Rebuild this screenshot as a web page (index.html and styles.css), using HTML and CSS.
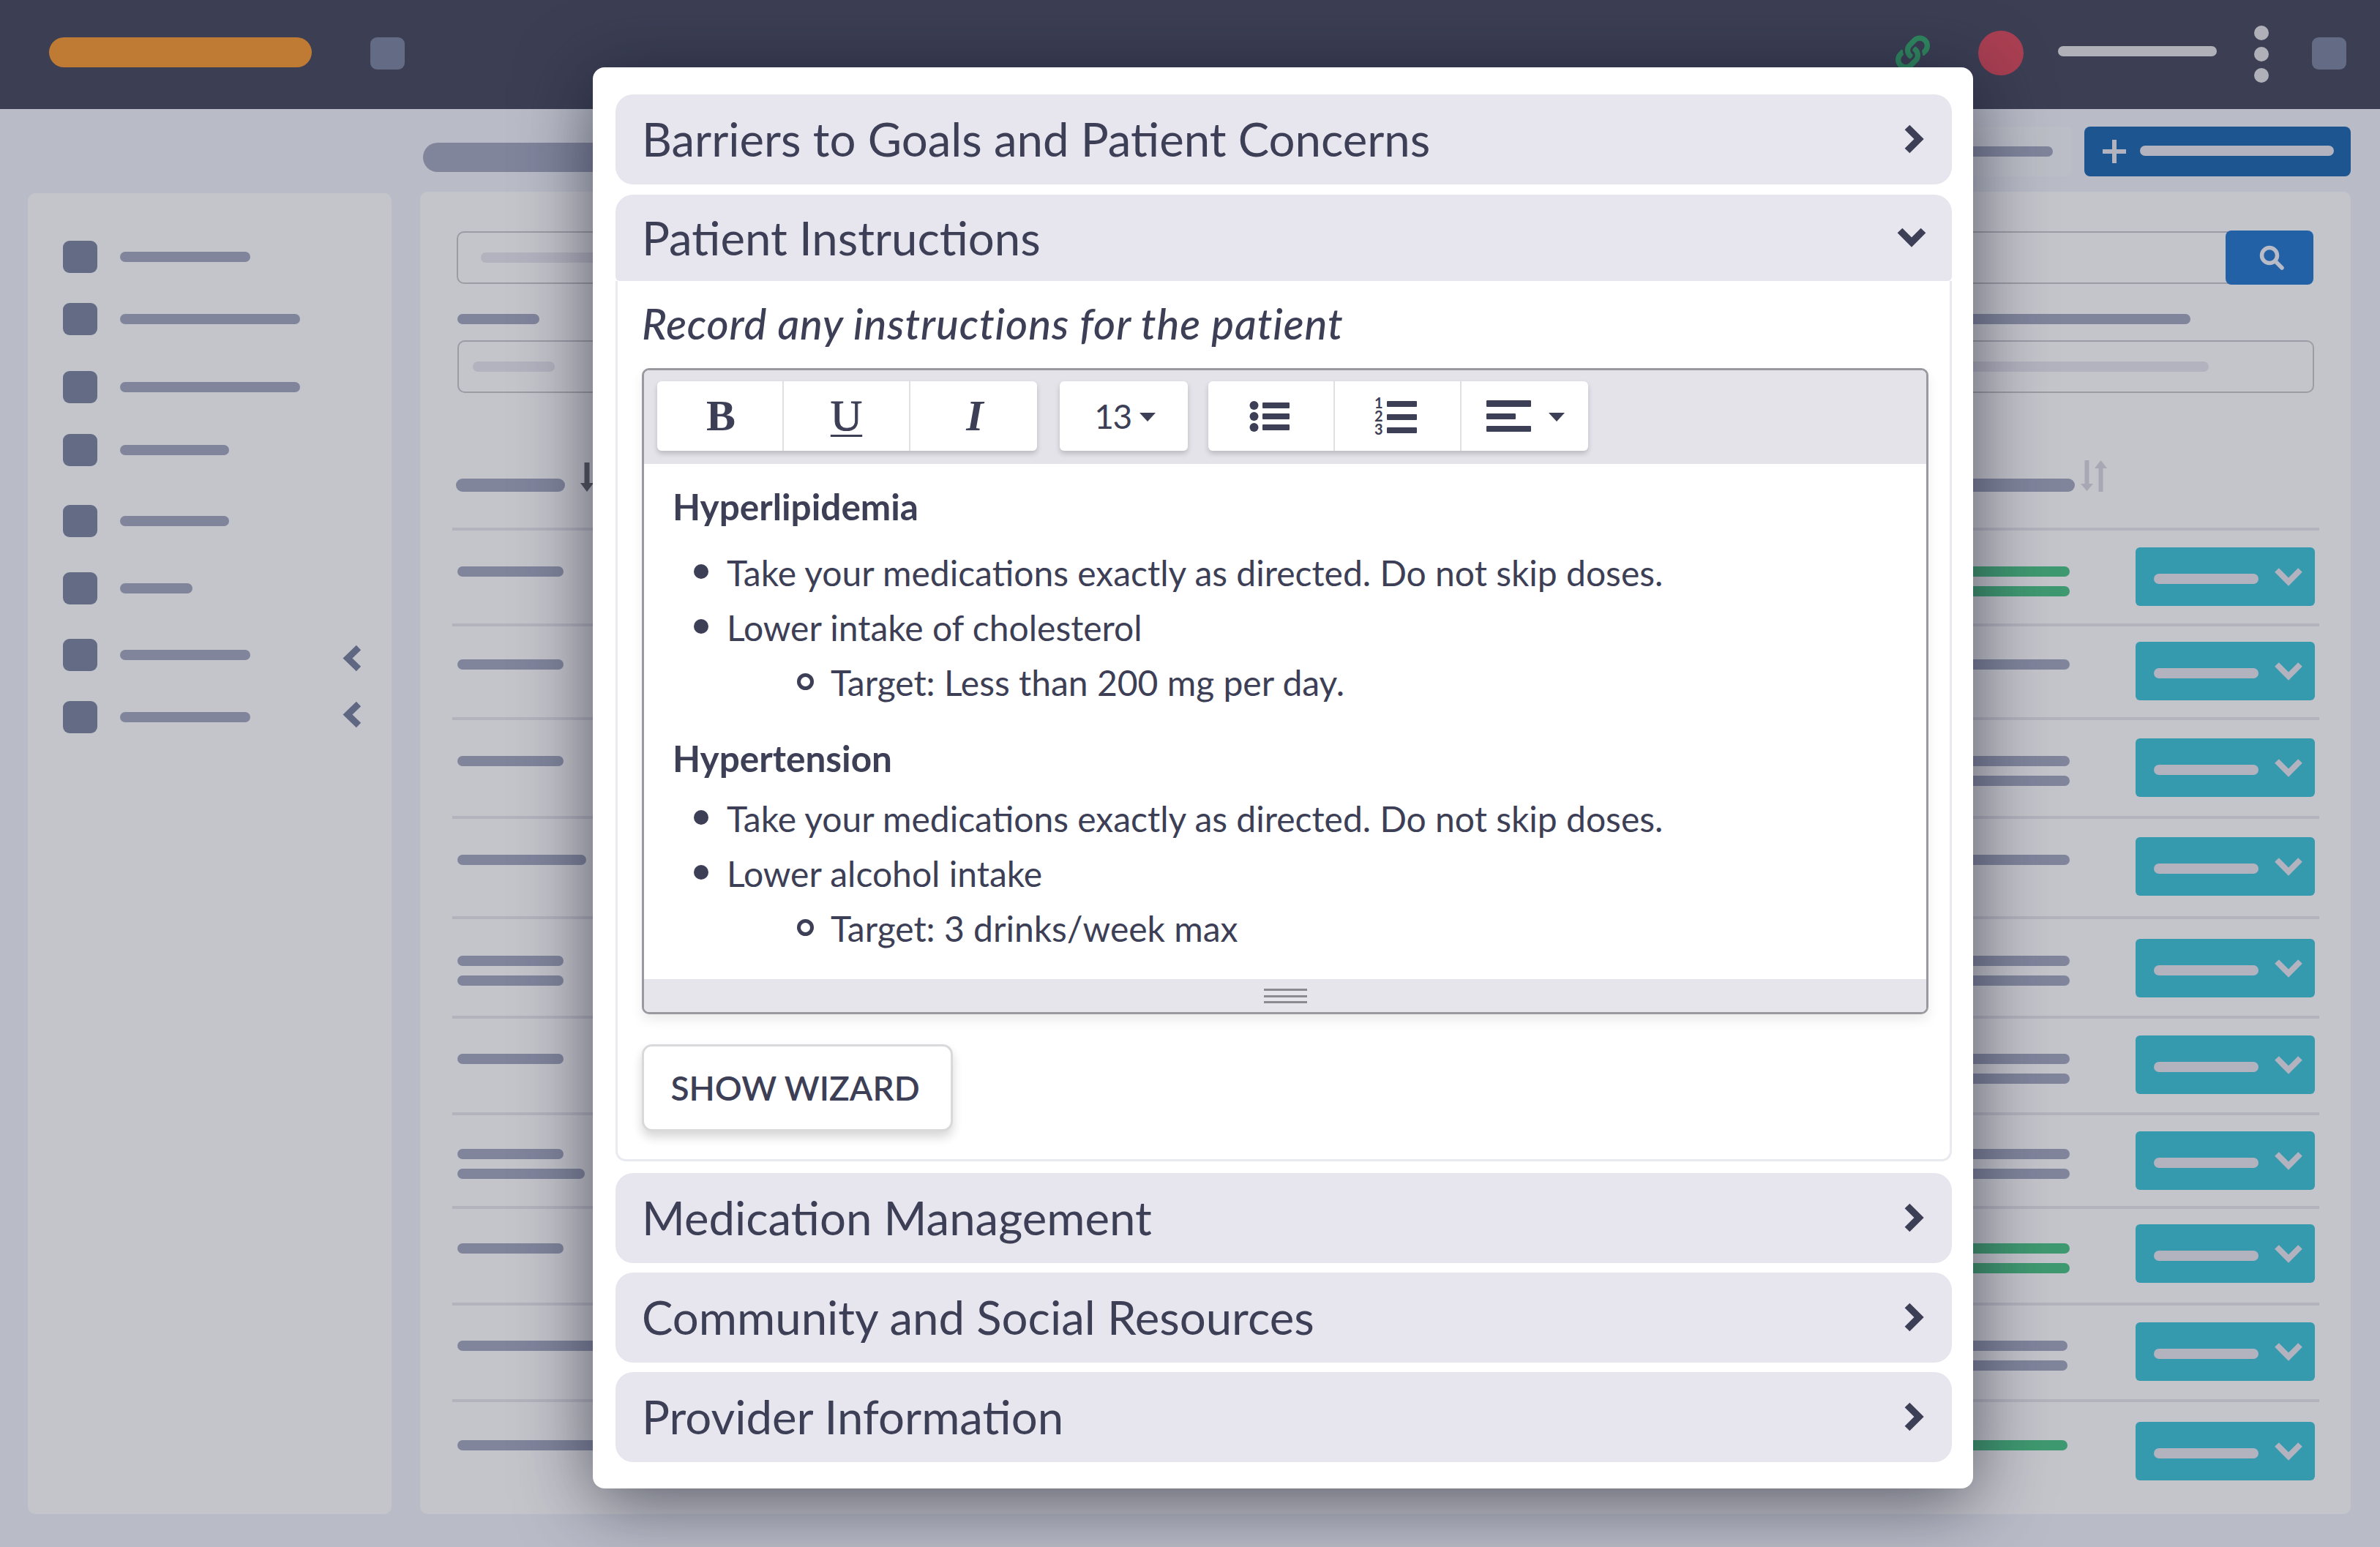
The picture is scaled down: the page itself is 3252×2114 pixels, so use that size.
FILE: index.html
```html
<!DOCTYPE html>
<html lang="en">
<head>
<meta charset="utf-8">
<title>Patient Instructions</title>
<link rel="stylesheet" href="styles.css">
</head>
<body>
<div class="page">
  <header class="topbar">
    <div class="logo"></div>
    <div class="tile tile-nav"></div>
    <div class="top-right">
      <svg class="link-icon" viewBox="0 0 512 512"><path fill="#2f8a60" d="M326.612 185.391c59.747 59.809 58.927 155.698.36 214.59-.11.12-.24.25-.36.37l-67.2 67.2c-59.27 59.27-155.699 59.262-214.96 0-59.27-59.26-59.27-155.7 0-214.96l37.106-37.106c9.84-9.84 26.786-3.3 27.294 10.606.648 17.722 3.826 35.527 9.69 52.721 1.986 5.822.567 12.262-3.783 16.612l-13.087 13.087c-28.026 28.026-28.905 73.66-1.155 101.96 28.024 28.579 74.086 28.749 102.325.51l67.2-67.19c28.191-28.191 28.073-73.757 0-101.83-3.701-3.694-7.429-6.564-10.341-8.569a16.037 16.037 0 0 1-6.947-12.606c-.396-10.567 3.348-21.456 11.698-29.806l21.054-21.055c5.521-5.521 14.182-6.199 20.584-1.731a152.482 152.482 0 0 1 20.522 17.197zM467.547 44.449c-59.261-59.262-155.69-59.27-214.96 0l-67.2 67.2c-.12.12-.25.25-.36.37-58.566 58.892-59.387 154.781.36 214.59a152.454 152.454 0 0 0 20.521 17.196c6.402 4.468 15.064 3.789 20.584-1.731l21.054-21.055c8.35-8.35 12.094-19.239 11.698-29.806a16.037 16.037 0 0 0-6.947-12.606c-2.912-2.005-6.64-4.875-10.341-8.569-28.073-28.073-28.191-73.639 0-101.83l67.2-67.19c28.239-28.239 74.3-28.069 102.325.51 27.75 28.3 26.872 73.934-1.155 101.96l-13.087 13.087c-4.35 4.35-5.769 10.79-3.783 16.612 5.864 17.194 9.042 34.999 9.69 52.721.509 13.906 17.454 20.446 27.294 10.606l37.106-37.106c59.271-59.259 59.271-155.699.001-214.959z"/></svg>
      <div class="status-dot"></div>
      <div class="user-bar"></div>
      <div class="kebab"><i></i><i></i><i></i></div>
      <div class="tile"></div>
    </div>
  </header>

  <div class="content">
    <aside class="sidebar">
      <div class="nav-item"><div class="tile"></div><div class="bar w178"></div></div>
      <div class="nav-item"><div class="tile"></div><div class="bar w246"></div></div>
      <div class="nav-item"><div class="tile"></div><div class="bar w246"></div></div>
      <div class="nav-item"><div class="tile"></div><div class="bar w149"></div></div>
      <div class="nav-item"><div class="tile"></div><div class="bar w149"></div></div>
      <div class="nav-item"><div class="tile"></div><div class="bar w99"></div></div>
      <div class="nav-item"><div class="tile"></div><div class="bar w178"></div><svg class="nav-chevron" viewBox="0 0 27 37"><polyline points="22,4 7,18.5 22,33"/></svg></div>
      <div class="nav-item"><div class="tile"></div><div class="bar w178"></div><svg class="nav-chevron nav-chevron-up" viewBox="0 0 27 37"><polyline points="22,4 7,18.5 22,33"/></svg></div>
    </aside>

    <main class="main">
      <div class="title-row">
        <div class="title-pill"></div>
        <div class="ghost-btn"><div class="bar ghost-bar"></div></div>
        <div class="add-btn">
          <svg class="plus" viewBox="0 0 32 32"><path d="M13 0h6v13h13v6H19v13h-6V19H0v-6h13z"/></svg>
          <div class="add-bar"></div>
        </div>
      </div>

      <section class="card">
        <div class="form">
          <div class="field field-search">
            <div class="ph ph-search"></div>
            <div class="search-btn">
              <svg class="search-icon" viewBox="0 0 34 34"><circle cx="14" cy="14" r="10.5"/><line x1="22" y1="22" x2="31" y2="31"/></svg>
            </div>
          </div>
          <div class="label-row"><div class="bar w112"></div><div class="bar label-long"></div></div>
          <div class="field field-two"><div class="ph w112"></div><div class="ph ph-long"></div></div>
        </div>

        <div class="thead">
          <div class="bar th-left"></div>
          <svg class="sort-down" viewBox="0 0 18 40"><path d="M5.500 0h7v28h5.500l-9 12-9-12h5.500z"/></svg>
          <div class="th-right"></div>
          <svg class="sort-both" viewBox="0 0 36 44"><path d="M5.500 1h6v32h5.500l-8.500 10L0 33h5.500zM24.500 44h6V12H36L27.500 1 19 12h5.500z"/></svg>
        </div>

        <div class="table">
          <div class="row"><div class="bars"><div class="bar b145"></div></div><div class="bars bars-right"><div class="bar green"></div><div class="bar green"></div></div><div class="row-btn"><div class="btn-bar"></div><svg class="btn-chevron" viewBox="0 0 38 26"><polyline points="3,4 19,20 35,4"/></svg></div></div>
          <div class="row"><div class="bars"><div class="bar b145"></div></div><div class="bars bars-right"><div class="bar"></div></div><div class="row-btn"><div class="btn-bar"></div><svg class="btn-chevron" viewBox="0 0 38 26"><polyline points="3,4 19,20 35,4"/></svg></div></div>
          <div class="row"><div class="bars"><div class="bar b145"></div></div><div class="bars bars-right"><div class="bar"></div><div class="bar"></div></div><div class="row-btn"><div class="btn-bar"></div><svg class="btn-chevron" viewBox="0 0 38 26"><polyline points="3,4 19,20 35,4"/></svg></div></div>
          <div class="row"><div class="bars"><div class="bar b176"></div></div><div class="bars bars-right"><div class="bar"></div></div><div class="row-btn"><div class="btn-bar"></div><svg class="btn-chevron" viewBox="0 0 38 26"><polyline points="3,4 19,20 35,4"/></svg></div></div>
          <div class="row"><div class="bars"><div class="bar b145"></div><div class="bar b145"></div></div><div class="bars bars-right"><div class="bar"></div><div class="bar"></div></div><div class="row-btn"><div class="btn-bar"></div><svg class="btn-chevron" viewBox="0 0 38 26"><polyline points="3,4 19,20 35,4"/></svg></div></div>
          <div class="row"><div class="bars"><div class="bar b145"></div></div><div class="bars bars-right"><div class="bar"></div><div class="bar"></div></div><div class="row-btn"><div class="btn-bar"></div><svg class="btn-chevron" viewBox="0 0 38 26"><polyline points="3,4 19,20 35,4"/></svg></div></div>
          <div class="row"><div class="bars"><div class="bar b145"></div><div class="bar b174"></div></div><div class="bars bars-right"><div class="bar"></div><div class="bar"></div></div><div class="row-btn"><div class="btn-bar"></div><svg class="btn-chevron" viewBox="0 0 38 26"><polyline points="3,4 19,20 35,4"/></svg></div></div>
          <div class="row"><div class="bars"><div class="bar b145"></div></div><div class="bars bars-right"><div class="bar green"></div><div class="bar green"></div></div><div class="row-btn"><div class="btn-bar"></div><svg class="btn-chevron" viewBox="0 0 38 26"><polyline points="3,4 19,20 35,4"/></svg></div></div>
          <div class="row"><div class="bars"><div class="bar b240"></div></div><div class="bars bars-right bars-short"><div class="bar"></div><div class="bar"></div></div><div class="row-btn"><div class="btn-bar"></div><svg class="btn-chevron" viewBox="0 0 38 26"><polyline points="3,4 19,20 35,4"/></svg></div></div>
          <div class="row"><div class="bars"><div class="bar b240"></div></div><div class="bars bars-right bars-short"><div class="bar green"></div></div><div class="row-btn"><div class="btn-bar"></div><svg class="btn-chevron" viewBox="0 0 38 26"><polyline points="3,4 19,20 35,4"/></svg></div></div>
        </div>
      </section>
    </main>
  </div>

  <div class="modal">
    <div class="acc-head acc-first">
      <span>Barriers to Goals and Patient Concerns</span>
      <svg class="chev-right" viewBox="0 0 28 42"><polyline points="5,5 21,21 5,37"/></svg>
    </div>
    <div class="acc-head acc-open">
      <span>Patient Instructions</span>
      <svg class="chev-down" viewBox="0 0 42 28"><polyline points="5,5 21,21 37,5"/></svg>
    </div>
    <div class="acc-body">
      <p class="prompt">Record any instructions for the patient</p>
      <div class="editor">
        <div class="toolbar">
          <div class="tool-group">
            <button class="tool tool-b">B</button>
            <button class="tool tool-u">U</button>
            <button class="tool tool-i">I</button>
          </div>
          <div class="tool-group group-size">
            <button class="tool tool-size">13<span class="caret"></span></button>
          </div>
          <div class="tool-group">
            <button class="tool tool-ul">
              <svg class="tool-icon" viewBox="0 0 56 42"><circle cx="6.500" cy="6" r="6"/><circle cx="6.500" cy="21" r="6"/><circle cx="6.500" cy="36" r="6"/><rect x="18" y="2" width="37" height="8" rx="1"/><rect x="18" y="17" width="37" height="8" rx="1"/><rect x="18" y="32" width="37" height="8" rx="1"/></svg>
            </button>
            <button class="tool tool-ol">
              <svg class="tool-icon ol-icon" viewBox="0 -8 58 66"><text x="0" y="14" class="num">1</text><text x="0" y="32" class="num">2</text><text x="0" y="50" class="num">3</text><rect x="17" y="4" width="41" height="8" rx="1"/><rect x="17" y="22" width="41" height="8" rx="1"/><rect x="17" y="40" width="41" height="8" rx="1"/></svg>
            </button>
            <button class="tool tool-align">
              <svg class="tool-icon align-icon" viewBox="0 0 61 43"><rect width="61" height="9" rx="1"/><rect y="18" width="40" height="8" rx="1"/><rect y="35" width="61" height="8" rx="1"/></svg>
              <span class="caret"></span>
            </button>
          </div>
        </div>
        <div class="doc">
          <p class="doc-h doc-h1">Hyperlipidemia</p>
          <ul>
            <li>Take your medications exactly as directed. Do not skip doses.</li>
            <li>Lower intake of cholesterol
              <ul><li>Target: Less than 200 mg per day.</li></ul>
            </li>
          </ul>
          <p class="doc-h doc-h2">Hypertension</p>
          <ul>
            <li>Take your medications exactly as directed. Do not skip doses.</li>
            <li>Lower alcohol intake
              <ul><li>Target: 3 drinks/week max</li></ul>
            </li>
          </ul>
        </div>
        <div class="statusbar"><div class="grip"></div></div>
      </div>
      <button class="wizard">SHOW WIZARD</button>
    </div>
    <div class="acc-head acc-after">
      <span>Medication Management</span>
      <svg class="chev-right" viewBox="0 0 28 42"><polyline points="5,5 21,21 5,37"/></svg>
    </div>
    <div class="acc-head">
      <span>Community and Social Resources</span>
      <svg class="chev-right" viewBox="0 0 28 42"><polyline points="5,5 21,21 5,37"/></svg>
    </div>
    <div class="acc-head">
      <span>Provider Information</span>
      <svg class="chev-right" viewBox="0 0 28 42"><polyline points="5,5 21,21 5,37"/></svg>
    </div>
  </div>
</div>
</body>
</html>
```
FILE: styles.css
```css
* { box-sizing: border-box; }
html, body { margin: 0; padding: 0; }
body { font-family: "Lato", "Liberation Sans", sans-serif; color: #3d3f56; }
.page { position: relative; width: 3252px; height: 2114px; overflow: hidden; background: #b9bcc7; display: flex; flex-direction: column; }

/* Top bar */
.topbar { height: 149px; flex: none; background: #3c3f54; display: flex; align-items: center; padding: 0 46px 3px 67px; }
.logo { width: 359px; height: 41px; border-radius: 21px; background: #bf7b33; margin-top: -3px; }
.tile { width: 47px; height: 44px; flex: none; border-radius: 9px; background: #636b85; }
.tile-nav { margin-left: 80px; }
.top-right { margin-left: auto; display: flex; align-items: center; }
.link-icon { width: 47px; height: 48px; margin-top: -2px; }
.status-dot { width: 62px; height: 61px; border-radius: 50%; background: #aa3f52; margin-left: 66px; margin-top: -1px; }
.user-bar { width: 217px; height: 14px; border-radius: 7px; background: #b0b1b8; margin-left: 47px; margin-top: -7px; }
.kebab { display: flex; flex-direction: column; gap: 9px; margin-left: 51px; margin-right: 59px; margin-top: 2px; }
.kebab i { display: block; width: 20px; height: 20px; border-radius: 50%; background: #b0b1b8; }

/* Layout */
.content { flex: 1; display: grid; grid-template-columns: 497px 2638px; column-gap: 39px; padding: 0 0 45px 38px; min-height: 0; }
.sidebar { margin-top: 115px; background: #c4c5cb; border-radius: 10px; padding: 65px 48px 0; display: grid; grid-template-rows: 85px 93px 86px 97px 92px 91px 85px 80px; align-content: start; }
.nav-item { display: flex; align-items: flex-start; }
.nav-item .bar { margin-left: 31px; margin-top: 15px; }
.nav-chevron { width: 27px; height: 37px; margin-left: auto; margin-top: 8px; margin-right: -8px; fill: none; stroke: #5f6783; stroke-width: 9; }
.nav-chevron-up { margin-top: 0; }

.bar { height: 14px; border-radius: 7px; background: #80859c; flex: none; }
.w99 { width: 99px; } .w112 { width: 112px; } .w149 { width: 149px; } .w178 { width: 178px; } .w246 { width: 246px; }

.main { padding-top: 24px; display: flex; flex-direction: column; min-height: 0; }
.title-row { height: 68px; flex: none; display: flex; align-items: flex-start; }
.title-pill { width: 420px; height: 40px; border-radius: 20px; background: #80859c; margin: 22px 0 0 4px; }
.ghost-btn { width: 300px; height: 68px; margin-left: auto; border-radius: 8px; background: #bcbec7; display: flex; align-items: center; justify-content: flex-end; padding-right: 26px; }
.ghost-bar { width: 200px; }
.add-btn { width: 364px; height: 68px; margin-left: 17px; border-radius: 8px; background: #1c5590; display: flex; align-items: center; padding-left: 25px; }
.plus { width: 32px; height: 32px; fill: #b3b2bf; }
.add-bar { width: 265px; height: 14px; border-radius: 7px; background: #b3b2bf; margin-left: 19px; margin-top: -2px; }

.card { flex: 1; margin-top: 21px; background: #c4c5cb; border-radius: 10px; padding: 54px 43px 0 44px; min-height: 0; }
.form { margin: 0 8px 0 6px; }
.field { height: 72px; border: 2px solid #9b9ca6; border-radius: 10px; display: flex; align-items: center; }
.ph { height: 14px; border-radius: 7px; background: #b3b2bf; flex: none; }
.ph-search { width: 600px; margin-left: 31px; }
.search-btn { width: 120px; height: 74px; margin: -2px -2px -2px auto; background: #2361a7; border-radius: 8px; display: flex; align-items: center; justify-content: center; }
.search-icon { width: 34px; height: 34px; fill: none; stroke: #b9bcc7; stroke-width: 5.500; stroke-linecap: round; margin-left: 6px; }
.label-row { display: flex; justify-content: space-between; margin: 41px 0 22px 1px; }
.label-long { width: 600px; margin-right: 168px; }
.field-two { justify-content: space-between; margin-right: -1px; margin-left: 1px; padding: 0 142px 0 19px; }
.ph-long { width: 600px; }

.thead { display: flex; align-items: flex-end; height: 44px; margin: 91px 0 49px; padding-left: 5px; }
.th-left { width: 149px; height: 18px; border-radius: 9px; }
.sort-down { width: 18px; height: 40px; margin-left: 21px; fill: #555860; }
.th-right { width: 420px; height: 18px; border-radius: 9px; background: #80859c; margin-left: auto; }
.sort-both { width: 36px; height: 44px; margin-left: 8px; margin-right: 290px; fill: #a8a8b4; }

.table { display: grid; grid-template-rows: 131px 128px 135px 137px 136px 132px 128px 132px 132px 140px; }
.row { border-top: 4px solid #b3b3be; display: flex; align-items: flex-start; padding: 0 6px 0 7px; }
.row:nth-child(1) { --b: 49px; --t: 23px; }
.row:nth-child(2) { --b: 45px; --t: 21px; }
.row:nth-child(3) { --b: 49px; --t: 25px; }
.row:nth-child(4) { --b: 49px; --t: 25px; }
.row:nth-child(5) { --b: 50px; --t: 27px; }
.row:nth-child(6) { --b: 48px; --t: 23px; }
.row:nth-child(7) { --b: 46px; --t: 22px; }
.row:nth-child(8) { --b: 47px; --t: 21px; }
.row:nth-child(9) { --b: 48px; --t: 23px; }
.row:nth-child(10) { --b: 52px; --t: 27px; }
.bars { display: flex; flex-direction: column; gap: 13px; margin-top: var(--b); }
.bars-right { width: 420px; margin-left: auto; margin-right: 90px; }
.bars-short { margin-right: 93px; }
.green { background: #3f9970; }
.b145 { width: 145px; } .b174 { width: 174px; } .b176 { width: 176px; } .b240 { width: 240px; }
.bars-right .bar { width: 100%; }
.row-btn { width: 245px; height: 80px; flex: none; margin-top: var(--t); background: #369aaf; border-radius: 6px; display: flex; align-items: center; padding-left: 25px; }
.btn-bar { width: 143px; height: 14px; border-radius: 7px; background: #b3b2bf; margin-top: 6px; }
.btn-chevron { width: 38px; height: 26px; margin-left: 22px; fill: none; stroke: #b3b2bf; stroke-width: 8; }

/* Modal */
.modal { position: absolute; left: 810px; top: 92px; width: 1886px; height: 1942px; background: #fff; border-radius: 16px; padding: 37px 29px 0 31px; box-shadow: 0 16px 100px rgba(18, 20, 38, .62); }
.acc-head { height: 123px; background: #e7e5ed; border-radius: 24px; display: flex; align-items: center; justify-content: space-between; padding: 0 36px 2px; margin-bottom: 13px; font-size: 63.5px; font-weight: 400; color: #3d3f56; }
.acc-first { margin-bottom: 14px; }
.acc-open { height: 118px; margin-bottom: 0; border-radius: 24px 24px 6px 6px; }
.acc-after { margin-top: 16px; }
.chev-right { width: 28px; height: 42px; fill: none; stroke: #3d3f56; stroke-width: 9.500; margin-right: 2px; }
.chev-down { width: 42px; height: 28px; fill: none; stroke: #3d3f56; stroke-width: 9.500; margin-right: -2px; }
.acc-body { height: 1203px; border: 3px solid #e9e9f0; border-top: 0; border-radius: 0 0 14px 14px; padding: 0 29px 0 33px; }
.prompt { margin: 0; padding-top: 22px; height: 119px; font-size: 58px; letter-spacing: .9px; line-height: 72px; font-style: italic; font-weight: 500; color: #3d3f56; }
.editor { height: 883px; border: 3px solid #999aa0; border-radius: 10px; display: flex; flex-direction: column; box-shadow: 0 8px 16px rgba(0, 0, 0, .08); overflow: hidden; background: #fff; }
.toolbar { height: 128px; flex: none; background: #e4e3ea; display: flex; gap: 31px; padding: 15px 18px 0; }
.tool-group { display: flex; height: 95px; border-radius: 6px; box-shadow: 0 4px 7px rgba(0, 0, 0, .18); background: #fff; }
.group-size { margin-right: -3px; }
.tool { width: 173px; height: 95px; border: 0; border-right: 2px solid #e0e0e4; background: transparent; padding: 0; display: flex; align-items: center; justify-content: center; color: #3d3f56; font-family: "Lato", sans-serif; }
.tool:last-child { border-right: 0; }
.tool-b, .tool-u, .tool-i { font-family: "Liberation Serif", serif; font-size: 60px; font-weight: 700; padding-left: 3px; }
.tool-u { text-decoration: underline; text-decoration-thickness: 3px; text-underline-offset: 6px; font-weight: 400; -webkit-text-stroke: 1px #3d3f56; padding-left: 0; }
.tool-i { font-style: italic; }
.tool-size { width: 175px; font-size: 46px; letter-spacing: -1.5px; padding-left: 3px; }
.caret { width: 0; height: 0; border-left: 11px solid transparent; border-right: 11px solid transparent; border-top: 12px solid #3d3f56; margin-left: 11px; margin-top: 3px; }
.tool-icon { width: 56px; height: 42px; fill: #3d3f56; overflow: visible; }
.tool-ul { padding-right: 3px; }
.tool-ol { padding-right: 5px; }
.ol-icon { width: 58px; height: 66px; }
.num { font-family: "Lato", sans-serif; font-weight: 700; font-size: 20px; }
.tool-align { gap: 24px; padding-left: 2px; }
.tool-align .caret { margin-left: 0; }
.align-icon { width: 61px; height: 43px; }

.doc { flex: 1; padding: 21px 16px 0 39px; font-size: 48px; line-height: 75px; color: #3d3f56; }
.doc p { margin: 0; }
.doc-h { font-weight: 700; font-size: 49.500px; }
.doc-h1 { margin-bottom: 15px !important; }
.doc-h2 { margin-top: 29px !important; margin-bottom: 7px !important; }
.doc ul { margin: 0; padding: 0 0 0 74px; list-style: none; }
.doc ul ul { padding-left: 142px; }
.doc li { position: relative; }
.doc li::before { content: ""; box-sizing: border-box; position: absolute; left: -45px; top: 26px; width: 20px; height: 20px; border-radius: 50%; background: #3d3f56; }
.doc ul ul li::before { left: -46px; top: 25px; width: 23px; height: 23px; background: transparent; border: 5px solid #3d3f56; }
.statusbar { height: 45px; flex: none; background: #e6e5ec; display: flex; align-items: center; justify-content: center; }
.grip { width: 59px; height: 20px; border-top: 3px solid #8a8a90; border-bottom: 3px solid #8a8a90; position: relative; background: linear-gradient(#8a8a90, #8a8a90) center / 100% 3px no-repeat; margin-top: 1px; }
.wizard { display: block; width: 425px; height: 119px; margin-top: 41px; background: #fff; border: 3px solid #d9d9dc; border-radius: 14px; box-shadow: 0 8px 14px rgba(0, 0, 0, .16); font-family: "Lato", sans-serif; font-size: 46px; font-weight: 600; color: #3d3f56; padding: 0 6px 0 0; }
```
